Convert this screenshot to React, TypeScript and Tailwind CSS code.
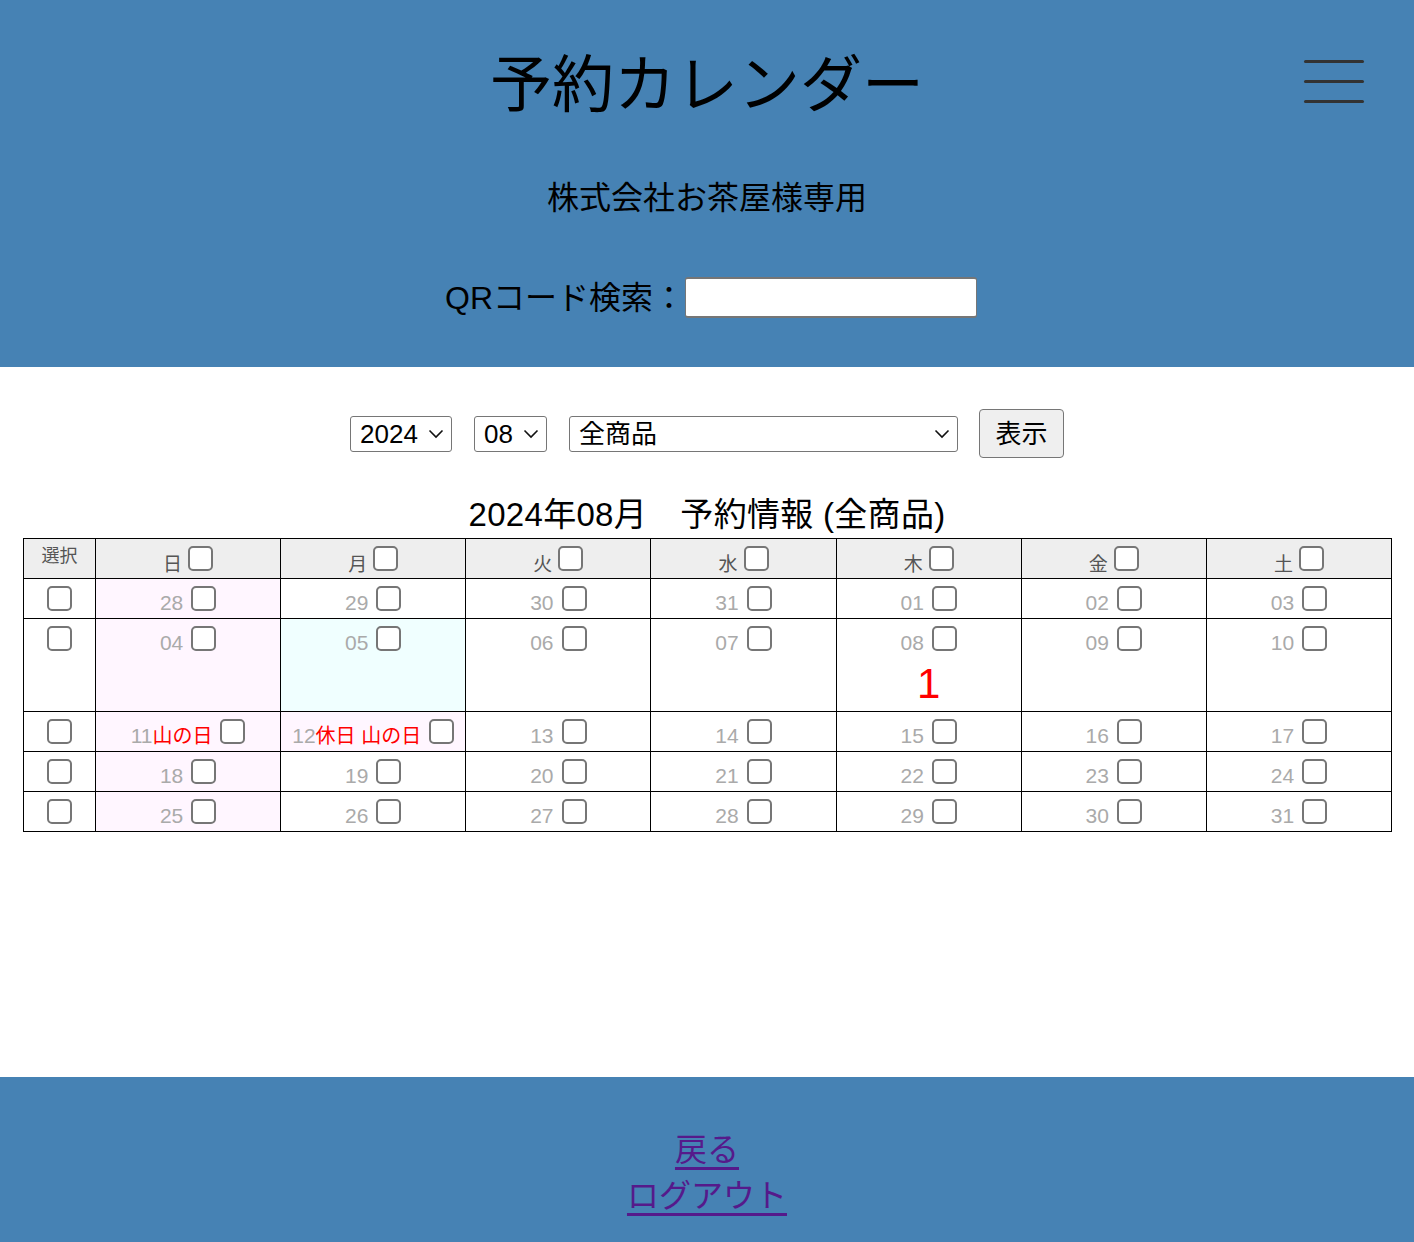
import type { ReactNode } from "react";

const jp = { fontFamily: '"Liberation Sans", "Noto Sans CJK JP", "Noto Sans", sans-serif' };

type Day = { n: string; holiday?: string; bg?: string; count?: string };

const weeks: Day[][] = [
  [{ n: "28", bg: "bg-[#fff6ff]" }, { n: "29" }, { n: "30" }, { n: "31" }, { n: "01" }, { n: "02" }, { n: "03" }],
  [
    { n: "04", bg: "bg-[#fff6ff]" },
    { n: "05", bg: "bg-[#f0ffff]" },
    { n: "06" },
    { n: "07" },
    { n: "08", count: "1" },
    { n: "09" },
    { n: "10" },
  ],
  [
    { n: "11", holiday: "山の日", bg: "bg-[#fff6ff]" },
    { n: "12", holiday: "休日 山の日", bg: "bg-[#fff6ff]" },
    { n: "13" },
    { n: "14" },
    { n: "15" },
    { n: "16" },
    { n: "17" },
  ],
  [{ n: "18", bg: "bg-[#fff6ff]" }, { n: "19" }, { n: "20" }, { n: "21" }, { n: "22" }, { n: "23" }, { n: "24" }],
  [{ n: "25", bg: "bg-[#fff6ff]" }, { n: "26" }, { n: "27" }, { n: "28" }, { n: "29" }, { n: "30" }, { n: "31" }],
];

const weekdays = ["日", "月", "火", "水", "木", "金", "土"];

function Box() {
  return (
    <input
      type="checkbox"
      className="appearance-none w-[25px] h-[25px] shrink-0 border-2 border-[#767676] rounded-[5px] bg-white m-0"
    />
  );
}

function Chevron() {
  return (
    <svg width="16" height="10" viewBox="0 0 16 10" className="pointer-events-none absolute right-[8px] top-1/2 -translate-y-1/2">
      <path d="M1.5 1.5 L8 8 L14.5 1.5" fill="none" stroke="#111" strokeWidth="1.6" />
    </svg>
  );
}

function Select({ w, children }: { w: string; children: ReactNode }) {
  return (
    <div className={`relative ${w} h-[36px]`}>
      <select
        className="appearance-none w-full h-full border border-[#767676] rounded-[3px] bg-white pl-[9px] text-[26px] leading-none text-black outline-none"
        style={jp}
      >
        {children}
      </select>
      <Chevron />
    </div>
  );
}

export default function App() {
  return (
    <div className="w-[1414px] min-h-[1242px] bg-white" style={jp}>
      <header className="relative bg-[#4682b4] pt-[36px] pb-[49px] flex flex-col items-center text-black">
        <h1 className="text-[62px] leading-[100px] font-normal">予約カレンダー</h1>
        <div className="absolute right-[50px] top-[60px] flex flex-col gap-[17px]">
          <span className="block w-[60px] h-[3px] bg-[#333] rounded-sm" />
          <span className="block w-[60px] h-[3px] bg-[#333] rounded-sm" />
          <span className="block w-[60px] h-[3px] bg-[#333] rounded-sm" />
        </div>
        <p className="mt-[42px] text-[32px] leading-[40px]">株式会社お茶屋様専用</p>
        <div className="mt-[59px] flex items-center h-[41px] pl-[8px]">
          <label className="text-[32px] leading-[40px]">QRコード検索：</label>
          <input
            type="text"
            className="w-[292px] h-[41px] bg-white border-t-[2px] border-b-[2px] border-x border-[#767676] rounded-[3px] outline-none"
          />
        </div>
      </header>

      <main className="h-[710px] pt-[42px] flex flex-col items-center">
        <div className="flex items-center h-[49px] gap-[22px]">
          <Select w="w-[102px]">
            <option>2024</option>
          </Select>
          <Select w="w-[73px]">
            <option>08</option>
          </Select>
          <Select w="w-[389px]">
            <option>全商品</option>
          </Select>
          <button className="w-[85px] h-[49px] bg-[#efefef] border border-[#767676] rounded-[4px] text-[26px] text-black leading-none ml-[-1px]">
            表示
          </button>
        </div>

        <h2 className="mt-[37px] text-[33px] leading-[40px] tracking-[0.3px] font-normal text-black">2024年08月　予約情報 (全商品)</h2>

        <table className="mt-[3px] w-[1369px] table-fixed border-collapse border border-black self-start ml-[23px]">
          <colgroup>
            <col className="w-[72px]" />
            {weekdays.map((d) => (
              <col key={d} />
            ))}
          </colgroup>
          <thead>
            <tr className="bg-[#eeeeee] h-[40px]">
              <th className="border border-black align-top pt-[5px] text-[18px] leading-[24px] font-normal text-[#555]">選択</th>
              {weekdays.map((d) => (
                <th key={d} className="border border-black align-top pt-[7px] font-normal">
                  <div className="flex items-end justify-center gap-[6px]">
                    <span className="text-[19px] leading-none text-[#555] mb-[-3px]">{d}</span>
                    <Box />
                  </div>
                </th>
              ))}
            </tr>
          </thead>
          <tbody>
            {weeks.map((week, wi) => (
              <tr key={wi} className={wi === 1 ? "h-[93px]" : "h-[40px]"}>
                <td className="border border-black align-top pt-[7px] text-center">
                  <div className="flex justify-center">
                    <Box />
                  </div>
                </td>
                {week.map((day, di) => (
                  <td key={di} className={`border border-black align-top pt-[7px] text-center ${day.bg ?? "bg-white"}`}>
                    <div className="flex items-end justify-center gap-[8px]">
                      <span className="text-[21px] leading-none text-[#aaaaaa] mb-[-2px] whitespace-nowrap">
                        {day.n}
                        {day.holiday && <span className="text-[#ff0000] text-[20px]">{day.holiday}</span>}
                      </span>
                      <Box />
                    </div>
                    {day.count && (
                      <div className="mt-[13px] text-[42px] leading-[40px] text-[#ff0000]">{day.count}</div>
                    )}
                  </td>
                ))}
              </tr>
            ))}
          </tbody>
        </table>
      </main>

      <footer className="bg-[#4682b4] h-[165px] pt-[50px] flex flex-col items-center">
        <a href="#back" className="text-[32px] leading-[46px] text-[#551a8b] underline underline-offset-[6px]">
          戻る
        </a>
        <a href="#logout" className="text-[32px] leading-[46px] text-[#551a8b] underline underline-offset-[6px]">
          ログアウト
        </a>
      </footer>
    </div>
  );
}
